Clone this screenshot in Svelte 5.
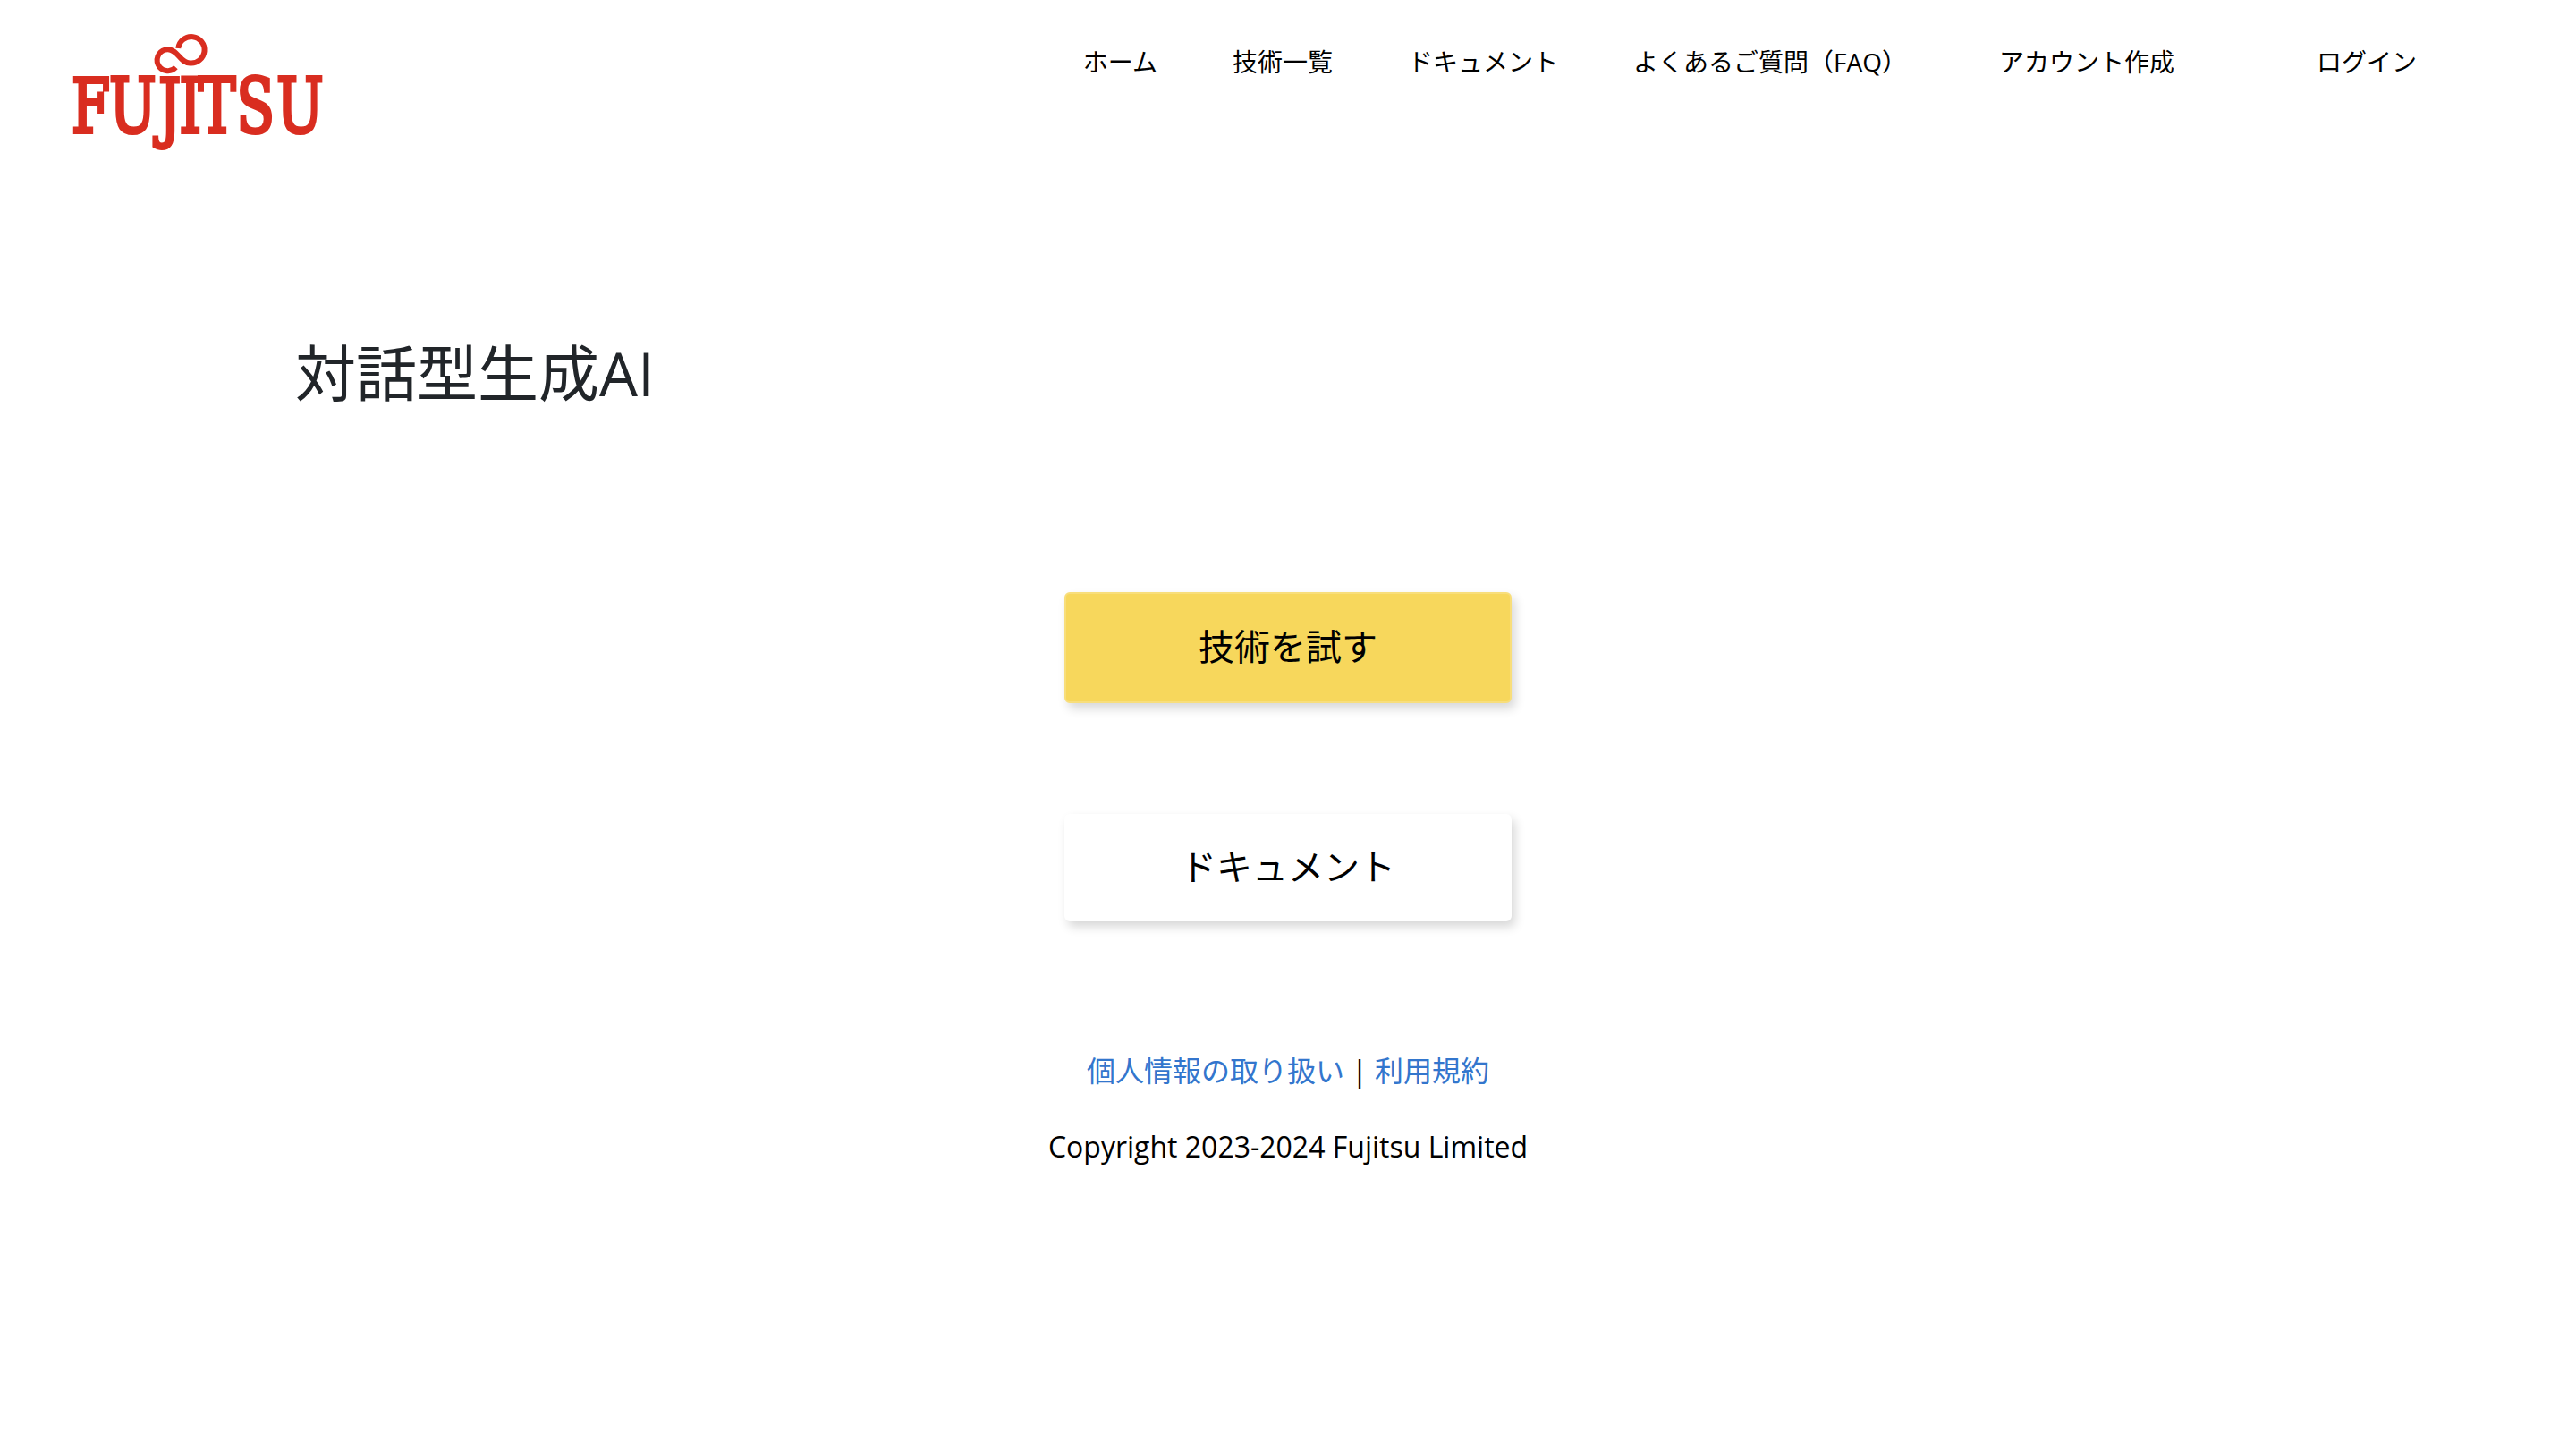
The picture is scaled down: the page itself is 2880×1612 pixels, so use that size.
<script lang="ts">
	const navItems = [
		{ label: 'ホーム', kind: 'page' },
		{ label: '技術一覧', kind: 'page' },
		{ label: 'ドキュメント', kind: 'page' },
		{ label: 'よくあるご質問（FAQ）', kind: 'page' },
		{ label: 'アカウント作成', kind: 'signup' },
		{ label: 'ログイン', kind: 'login' }
	];
</script>

<header>
	<a class="logo" href="#home" aria-label="Fujitsu">
		<svg width="320" height="170" viewBox="0 0 320 170">
			<path
				d="M139.3 34A14.7 14.7 0 1 1 152.3 50.4C141 50.4 139 35.2 127.7 35.2A12 12 0 1 0 136.5 55.3"
				fill="none"
				stroke="#d92d20"
				stroke-width="6"
			/>
			<!-- one x per letter keeps the spacing tight -->
			<text transform="translate(0 128) scale(0.82 1)" x="24.5 76 143 171.5 197.5 249.5 304">FUJITSU</text>
		</svg>
	</a>
	<nav>
		{#each navItems as item}
			<a class={item.kind} href="#{item.kind}">{item.label}</a>
		{/each}
	</nav>
</header>

<main>
	<h1>対話型生成AI</h1>
	<div class="actions">
		<button class="btn btn-primary">技術を試す</button>
		<button class="btn btn-plain">ドキュメント</button>
	</div>
</main>

<footer>
	<p><a href="#privacy">個人情報の取り扱い</a> | <a href="#terms">利用規約</a></p>
	<p>Copyright 2023-2024 Fujitsu Limited</p>
</footer>

<style>
	:global(body) {
		background: #fff;
		color: #000;
		font-family: 'Open Sans', 'Noto Sans CJK JP', sans-serif;
	}

	header {
		display: flex;
		justify-content: space-between;
		align-items: flex-start;
		height: 190px;
		padding: 20px 178px 0 60px;
		box-sizing: border-box;
	}

	.logo svg {
		display: block;
	}

	.logo text {
		fill: #d92d20;
		stroke: #d92d20;
		stroke-width: 4px;
		font-family: 'DejaVu Serif Condensed', 'DejaVu Serif', serif;
		font-stretch: condensed;
		font-size: 84px;
	}

	nav {
		display: flex;
		gap: 84px;
		padding-top: 28px;
		font-size: 28px;
		line-height: 42px;
		white-space: nowrap;
	}

	nav a {
		color: #000;
		text-decoration: none;
	}

	.signup {
		margin-left: 19px;
	}

	.login {
		margin-left: 75px;
	}

	main {
		padding: 179px 330px 0;
	}

	h1 {
		margin: 0;
		color: #212529;
		font-size: 68px;
		font-weight: 400;
		line-height: 96px;
	}

	.actions {
		display: flex;
		flex-direction: column;
		align-items: center;
		gap: 124px;
		padding-top: 197px;
	}

	.btn {
		width: 500px;
		height: 124px;
		box-sizing: border-box;
		padding: 0 0 7px;
		border: 2px solid #f8de7b;
		border-radius: 6px;
		box-shadow: 4px 6px 12px rgba(0, 0, 0, 0.16);
		color: #000;
		font-family: inherit;
		font-size: 40px;
	}

	.btn-primary {
		background: #f7d75c;
	}

	.btn-plain {
		height: 120px;
		border-color: #fff;
		background: #fff;
	}

	footer {
		padding-top: 143px;
		font-size: 32px;
		line-height: 48px;
		text-align: center;
	}

	footer p {
		margin: 0 0 37px;
	}

	footer a {
		color: #3376cd;
		text-decoration: none;
	}
</style>
